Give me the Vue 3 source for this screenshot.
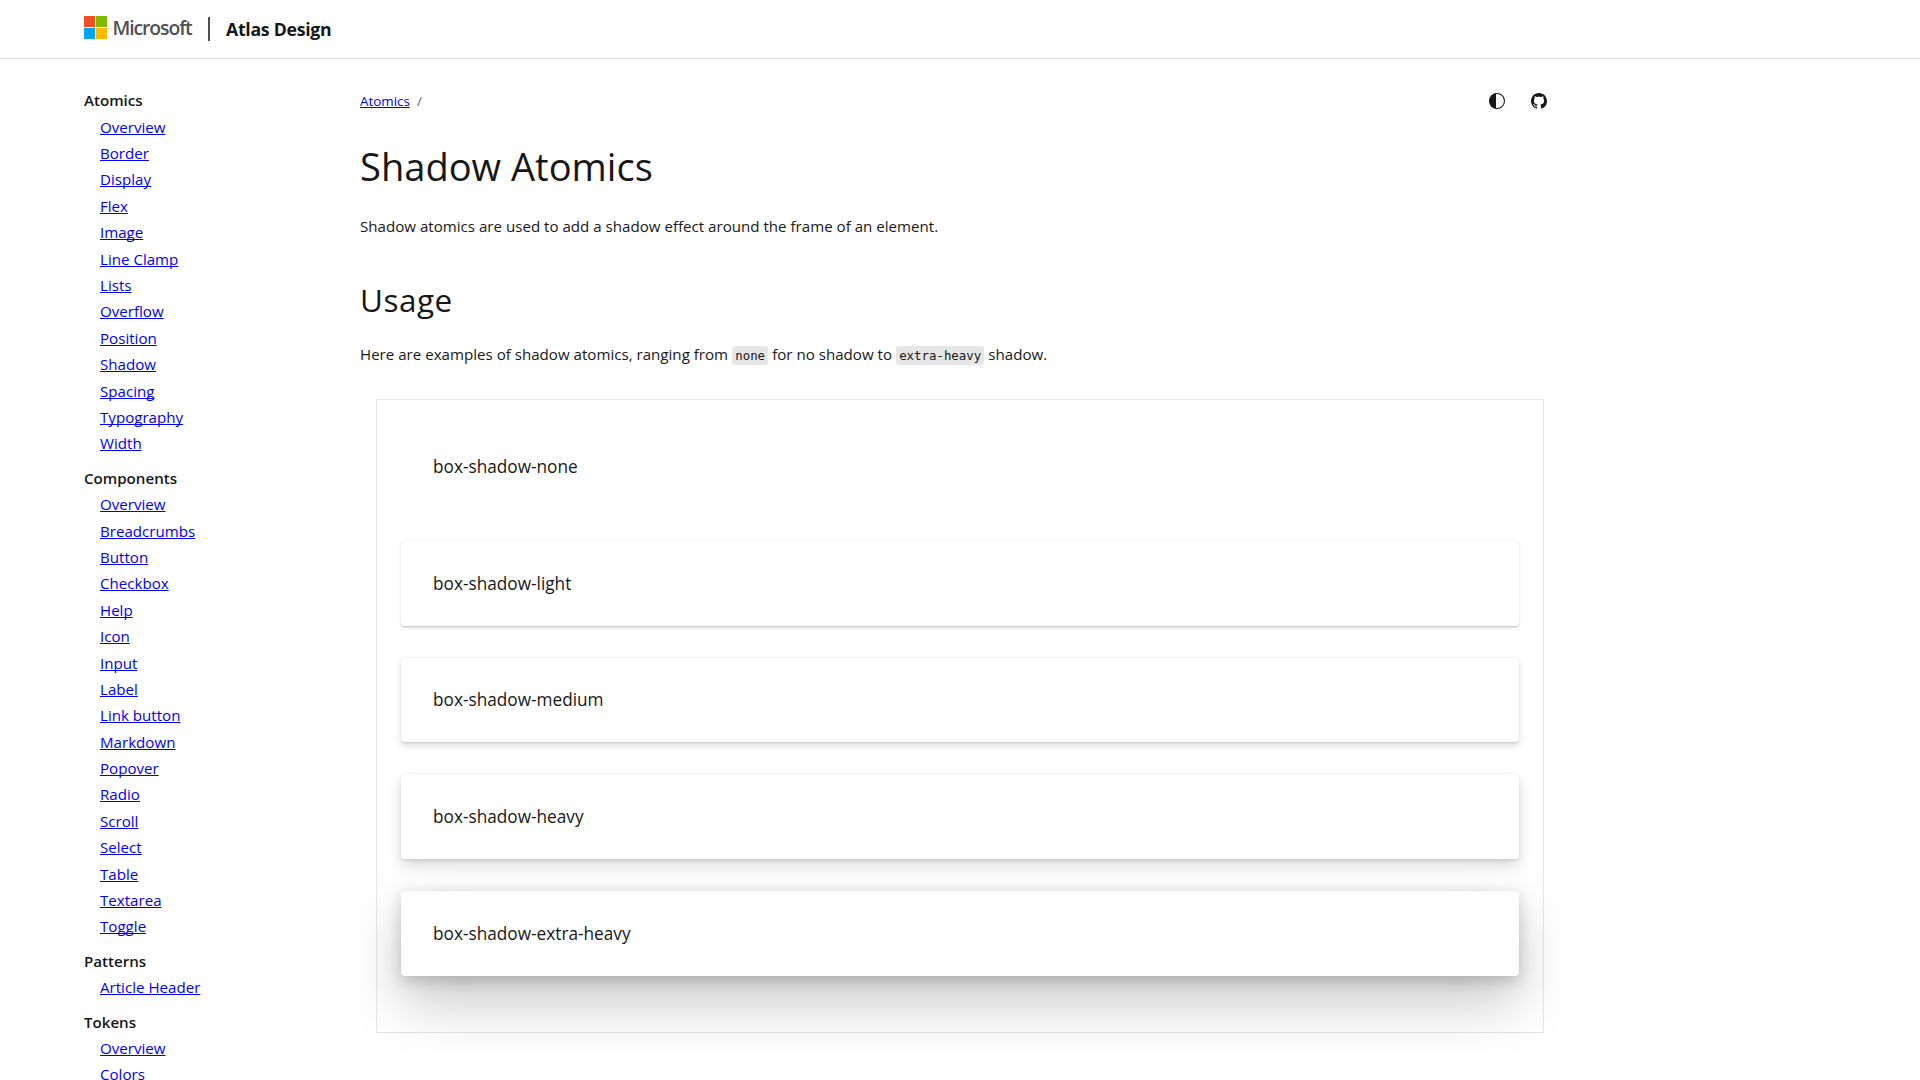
<script setup>
const nav = [
  {
    title: 'Atomics',
    items: ['Overview', 'Border', 'Display', 'Flex', 'Image', 'Line Clamp', 'Lists', 'Overflow', 'Position', 'Shadow', 'Spacing', 'Typography', 'Width']
  },
  {
    title: 'Components',
    items: ['Overview', 'Breadcrumbs', 'Button', 'Checkbox', 'Help', 'Icon', 'Input', 'Label', 'Link button', 'Markdown', 'Popover', 'Radio', 'Scroll', 'Select', 'Table', 'Textarea', 'Toggle']
  },
  { title: 'Patterns', items: ['Article Header'] },
  { title: 'Tokens', items: ['Overview', 'Colors'] }
]

const shadows = ['none', 'light', 'medium', 'heavy', 'extra-heavy']
</script>

<template>
  <div class="page">
    <header class="header">
      <a class="logo">
        <svg width="23" height="23" viewBox="0 0 23 23" aria-hidden="true">
          <path fill="#f25022" d="M0 0h11v11H0z" />
          <path fill="#7fba00" d="M12 0h11v11H12z" />
          <path fill="#00a4ef" d="M0 12h11v11H0z" />
          <path fill="#ffb900" d="M12 12h11v11H12z" />
        </svg>
        <span class="logo-text">Microsoft</span>
      </a>
      <span class="divider"></span>
      <span class="site">Atlas Design</span>
    </header>

    <div class="body">
      <nav class="sidebar">
        <section v-for="group in nav" :key="group.title" class="group">
          <p class="group-title">{{ group.title }}</p>
          <ul>
            <li v-for="item in group.items" :key="item"><a href="#">{{ item }}</a></li>
          </ul>
        </section>
      </nav>

      <main class="content">
        <div class="topbar">
          <div class="crumbs"><a href="#">Atomics</a><span class="slash">/</span></div>
          <div class="actions">
            <svg width="16" height="16" viewBox="0 0 16 16" aria-label="Theme">
              <circle cx="8" cy="8" r="7.45" fill="none" stroke="#171717" stroke-width="1.1" />
              <path d="M7 .6a7.45 7.45 0 0 0 0 14.8z" fill="#171717" />
            </svg>
            <svg width="16" height="16" viewBox="0 0 16 16" aria-label="GitHub">
              <path fill="#171717" d="M8 0C3.58 0 0 3.58 0 8c0 3.54 2.29 6.53 5.47 7.59.4.07.55-.17.55-.38 0-.19-.01-.82-.01-1.49-2.01.37-2.53-.49-2.69-.94-.09-.23-.48-.94-.82-1.13-.28-.15-.68-.52-.01-.53.63-.01 1.08.58 1.23.82.72 1.21 1.87.87 2.33.66.07-.52.28-.87.51-1.07-1.78-.2-3.64-.89-3.64-3.95 0-.87.31-1.59.82-2.15-.08-.2-.36-1.02.08-2.12 0 0 .67-.21 2.2.82.64-.18 1.32-.27 2-.27s1.36.09 2 .27c1.53-1.04 2.2-.82 2.2-.82.44 1.1.16 1.92.08 2.12.51.56.82 1.27.82 2.15 0 3.07-1.87 3.75-3.65 3.95.29.25.54.73.54 1.48 0 1.07-.01 1.93-.01 2.2 0 .21.15.46.55.38A8.01 8.01 0 0 0 16 8c0-4.42-3.58-8-8-8z" />
            </svg>
          </div>
        </div>
        <h1>Shadow Atomics</h1>
        <p class="intro">Shadow atomics are used to add a shadow effect around the frame of an element.</p>
        <h2>Usage</h2>
        <p class="usage">Here are examples of shadow atomics, ranging from <code>none</code> for no shadow to <code>extra-heavy</code> shadow.</p>
        <div class="example">
          <div v-for="s in shadows" :key="s" class="card" :class="'shadow-' + s">box-shadow-{{ s }}</div>
        </div>
      </main>
    </div>
  </div>
</template>

<style>
html,
body {
  margin: 0;
  overflow: hidden;
  background: #fff;
}
</style>

<style scoped>
.page {
  height: 1080px;
  overflow: hidden;
  color: #171717;
  font-family: "Open Sans", "Noto Sans", sans-serif;
  font-size: 15.12px;
}
p, h1, h2, ul {
  margin: 0;
  padding: 0;
  font-weight: 400;
}
a {
  color: #0000ee;
  text-decoration-skip-ink: none;
  text-decoration-thickness: 1px;
  text-underline-offset: 1px;
}
.header {
  display: flex;
  height: 58px;
  padding-left: 84px;
  border-bottom: 1px solid #e6e6e6;
}
.logo {
  display: flex;
  width: 124px;
  padding-top: 16px;
}
.logo-text {
  margin-left: 5.5px;
  color: #505050;
  font-size: 19.4px;
  font-weight: 600;
  line-height: 23px;
  letter-spacing: -1.1px;
}
.divider {
  width: 2px;
  height: 24px;
  margin-top: 17px;
  background: #505050;
}
.site {
  margin-left: 16px;
  padding-top: 16px;
  font-size: 17.7px;
  font-weight: 700;
  line-height: 26px;
  letter-spacing: -0.28px;
}
.body {
  display: flex;
}
.sidebar {
  box-sizing: border-box;
  width: 360px;
  padding: 28.3px 0 0 84px;
  line-height: 26.39px;
}
.group {
  margin-bottom: 8px;
}
.group-title {
  font-weight: 600;
}
.group ul {
  padding-left: 16px;
  list-style: none;
}
.content {
  width: 1200px;
  padding: 32px 0 60px;
  overflow-x: clip;
}
.topbar {
  display: flex;
  justify-content: space-between;
  height: 20px;
  padding-right: 13px;
}
.crumbs {
  font-size: 13.4px;
  line-height: 20px;
}
.slash {
  margin-left: 7px;
  color: #616161;
}
.actions {
  display: flex;
  align-items: center;
  gap: 26px;
}
h1 {
  margin-top: 29px;
  font-size: 38.1px;
  line-height: 52px;
}
.intro {
  margin-top: 22px;
  line-height: 24px;
}
h2 {
  margin-top: 41.5px;
  font-size: 31.5px;
  line-height: 40px;
  letter-spacing: 0.5px;
}
.usage {
  height: 24px;
  margin-top: 22.5px;
  line-height: 24px;
}
code {
  margin: 0 0.2px;
  padding: 2.4px 3px;
  border-radius: 3px;
  background: #e6e6e6;
  font-family: "DejaVu Sans Mono", "Liberation Mono", monospace;
  font-size: 12.4px;
}
.example {
  display: flex;
  flex-direction: column;
  gap: 32px;
  margin: 33px 16px 0;
  padding: 24px 24px 56px;
  border: 1px solid #e6e6e6;
}
.card {
  padding: 32.8px 32px 31.2px;
  border-radius: 4px;
  background: #fff;
  font-size: 17.23px;
  line-height: 20.8px;
}
.shadow-light {
  box-shadow: 0 1.6px 3.6px 0 rgba(0, 0, 0, 0.132), 0 0.3px 0.9px 0 rgba(0, 0, 0, 0.108);
}
.shadow-medium {
  box-shadow: 0 3.2px 7.2px 0 rgba(0, 0, 0, 0.132), 0 0.6px 1.8px 0 rgba(0, 0, 0, 0.108);
}
.shadow-heavy {
  box-shadow: 0 6.4px 14.4px 0 rgba(0, 0, 0, 0.132), 0 1.2px 3.6px 0 rgba(0, 0, 0, 0.108);
}
.shadow-extra-heavy {
  box-shadow: 0 25.6px 57.6px 0 rgba(0, 0, 0, 0.22), 0 4.8px 14.4px 0 rgba(0, 0, 0, 0.18);
}
</style>
